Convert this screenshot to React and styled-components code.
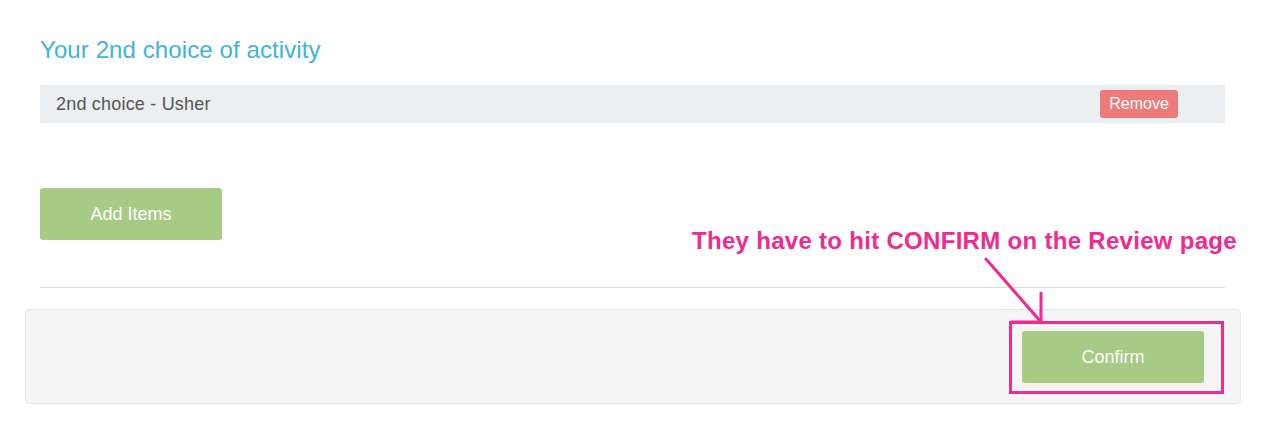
import React from 'react'
import styled, { createGlobalStyle } from 'styled-components'

const GlobalStyle = createGlobalStyle`
  body {
    margin: 0;
    background: #fff;
    font-family: "Liberation Sans", Arial, Helvetica, sans-serif;
  }
`

function App() {
  return (
    <>
      <GlobalStyle />
      <Page>
        <Main>
          <Heading>Your 2nd choice of activity</Heading>
          <ItemRow>
            <ItemName>2nd choice - Usher</ItemName>
            <RemoveButton>Remove</RemoveButton>
          </ItemRow>
          <GreenButton>Add Items</GreenButton>
          <Divider />
        </Main>
        <Footer>
          <GreenButton>Confirm</GreenButton>
        </Footer>

        <Note>They have to hit CONFIRM on the Review page</Note>
        <Arrow width="70" height="70" viewBox="0 0 70 70">
          <path d="M3 3 L58 66" />
          <path d="M58 37 L58 66 L28 66" />
        </Arrow>
        <Highlight />
      </Page>
    </>
  )
}

export default App

const Page = styled.div`
  position: relative;
  width: 1280px;
  height: 436px;
  padding-top: 35px;
  box-sizing: border-box;
`

const Main = styled.div`
  margin: 0 55px 0 40px;
`

const Heading = styled.h2`
  margin: 0 0 21px;
  font-size: 24px;
  font-weight: 400;
  line-height: 29px;
  letter-spacing: 0.1px;
  color: #3eb4da;
`

const ItemRow = styled.div`
  display: flex;
  align-items: center;
  justify-content: space-between;
  height: 38px;
  padding: 0 47px 0 16px;
  background: #eceff2;
`

const ItemName = styled.span`
  font-size: 18px;
  letter-spacing: 0.2px;
  color: #555;
`

const RemoveButton = styled.button`
  width: 78px;
  height: 28px;
  padding: 0;
  border: none;
  border-radius: 3px;
  background: #ee7b7b;
  color: #fff;
  font-family: inherit;
  font-size: 16px;
`

const GreenButton = styled.button`
  display: block;
  width: 182px;
  height: 52px;
  padding: 0;
  border: none;
  border-radius: 3px;
  background: #a7cb84;
  color: #fff;
  font-family: inherit;
  font-size: 18px;

  ${ItemRow} + & {
    margin-top: 65px;
  }
`

const Divider = styled.hr`
  margin: 47px 0 0;
  border: none;
  border-top: 1px solid #dcdcdc;
`

const Footer = styled.div`
  display: flex;
  justify-content: flex-end;
  margin: 21px 39px 0 25px;
  padding: 21px 36px 20px;
  background: #f5f5f5;
  border: 1px solid #e6e6e6;
  border-radius: 4px;
`

const Note = styled.div`
  position: absolute;
  left: 692px;
  top: 227px;
  font-size: 24px;
  font-weight: 700;
  line-height: 28px;
  letter-spacing: 0.3px;
  color: #f02a8e;
  white-space: nowrap;
`

const Arrow = styled.svg`
  position: absolute;
  left: 983px;
  top: 256px;
  overflow: visible;

  path {
    fill: none;
    stroke: #f02a8e;
    stroke-width: 3;
    stroke-linecap: round;
    stroke-linejoin: round;
  }
`

const Highlight = styled.div`
  position: absolute;
  left: 1009px;
  top: 321px;
  width: 215px;
  height: 73px;
  box-sizing: border-box;
  border: 3px solid #f02a8e;
`
